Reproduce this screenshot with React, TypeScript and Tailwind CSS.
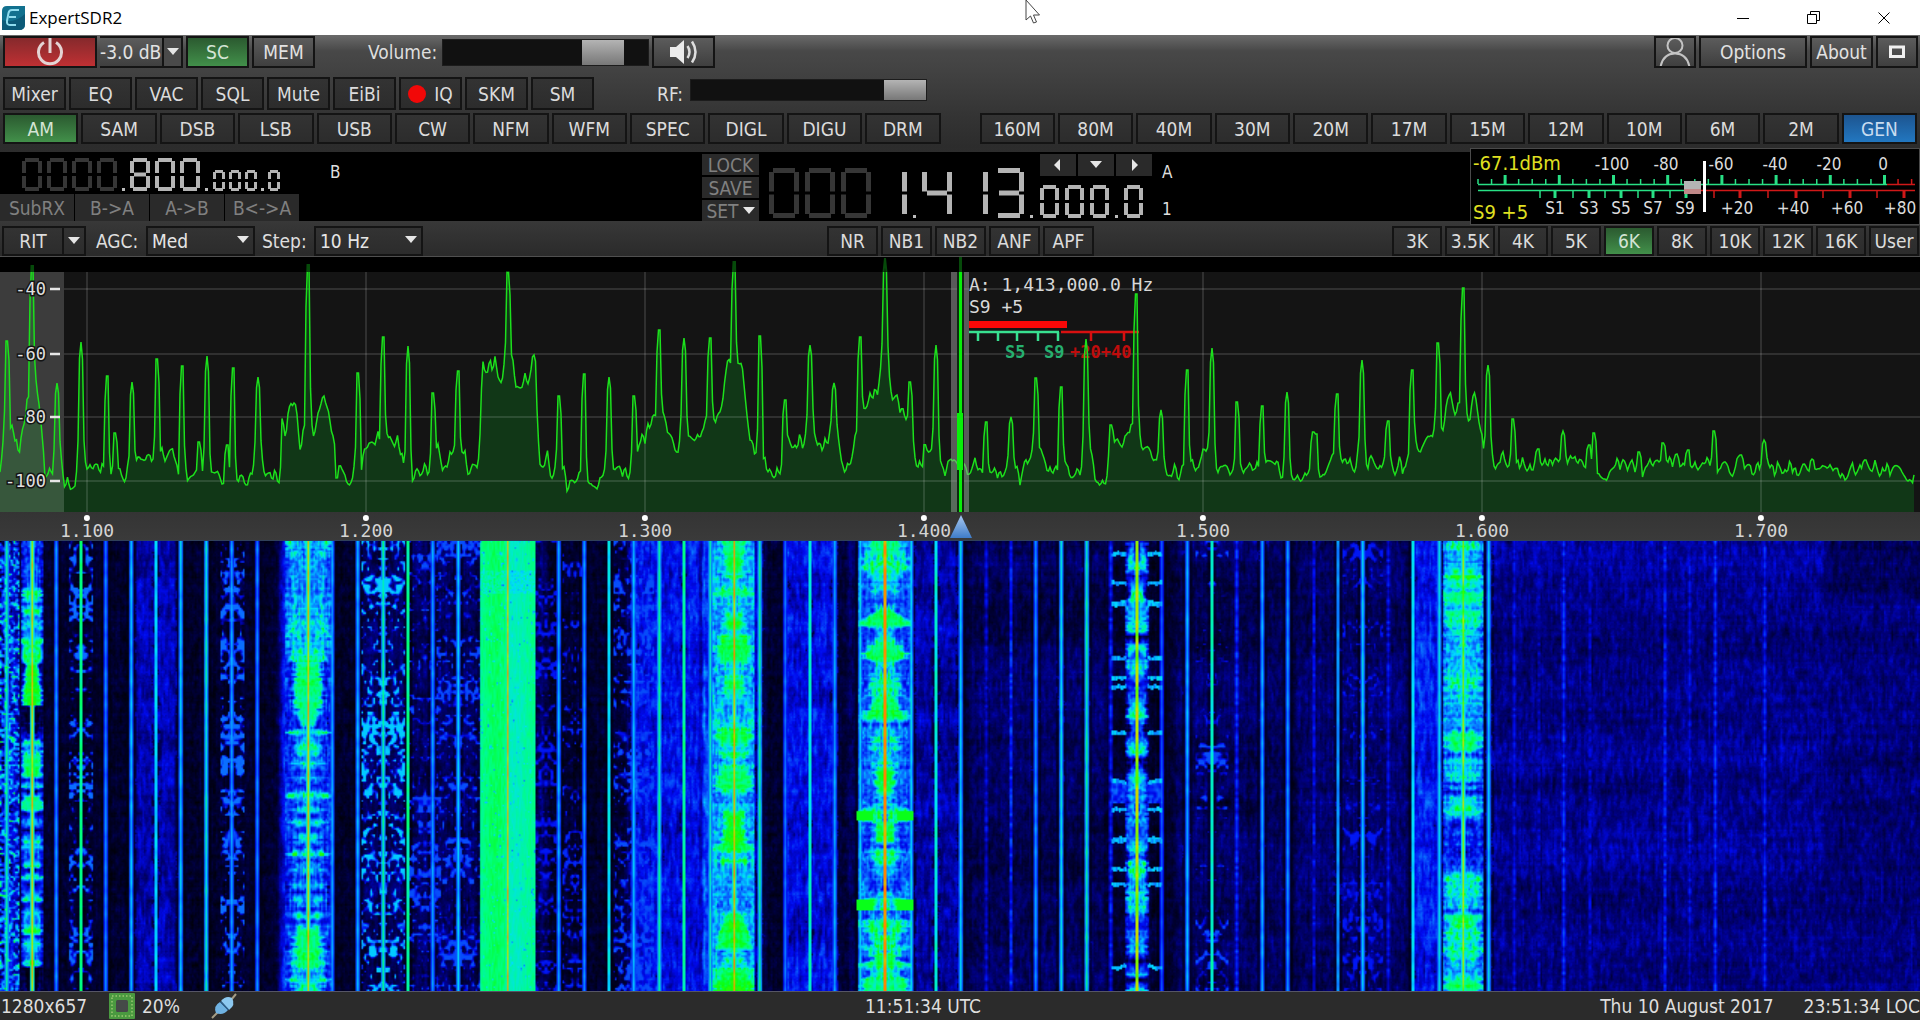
import { useEffect, useRef, type ReactNode } from "react";
import clsx from "clsx";

const modes = ["AM", "SAM", "DSB", "LSB", "USB", "CW", "NFM", "WFM", "SPEC", "DIGL", "DIGU", "DRM"];
const bands = ["160M", "80M", "40M", "30M", "20M", "17M", "15M", "12M", "10M", "6M", "2M", "GEN"];
const tools = ["Mixer", "EQ", "VAC", "SQL", "Mute", "EiBi", "IQ", "SKM", "SM"];
const filters = ["3K", "3.5K", "4K", "5K", "6K", "8K", "10K", "12K", "16K", "User"];
const noise = ["NR", "NB1", "NB2", "ANF", "APF"];

type Tone = "dark" | "light" | "green" | "blue" | "red";

const tones: Record<Tone, string> = {
  dark: "from-[#333333] to-[#2c2c2c] text-[#dcdcdc]",
  light: "from-[#5c5c5c] to-[#3f3f3f] text-[#e2e2e2]",
  green: "from-[#2b5a30] to-[#42904a] text-[#d4e4d4]",
  blue: "from-[#1d5590] to-[#2277c0] text-[#c8dcf0]",
  red: "from-[#86292c] to-[#bf3033] text-[#e8d8d8]",
};

function Btn({ tone = "dark", className, children, label }: { tone?: Tone; className?: string; children: ReactNode; label?: string }) {
  return (
    <button
      type="button"
      aria-label={label}
      className={clsx(
        "flex h-full items-center justify-center overflow-hidden border-2 border-[#141414] bg-linear-to-b whitespace-nowrap",
        tones[tone],
        className,
      )}
    >
      {children}
    </button>
  );
}

function Caret({ dir = "down", className }: { dir?: "down" | "left" | "right"; className?: string }) {
  const d = { down: "M0 2H12L6 9Z", left: "M8 0V12L2 6Z", right: "M4 0V12L10 6Z" }[dir];
  return (
    <svg viewBox="0 0 12 12" className={clsx("size-3 fill-[#e6e6e6]", className)} aria-hidden="true">
      <path d={d} />
    </svg>
  );
}

function Combo({ id, value, className }: { id: string; value: string; className?: string }) {
  return (
    <div className={clsx("relative h-full", className)}>
      <select
        id={id}
        defaultValue={value}
        className="h-full w-full appearance-none border-2 border-[#141414] bg-linear-to-b from-[#333333] to-[#2c2c2c] pl-1 text-[#e6e6e6]"
      >
        <option>{value}</option>
      </select>
      <Caret className="pointer-events-none absolute top-2 right-1.5" />
    </div>
  );
}

function Slider({ id, value, className }: { id: string; value: number; className?: string }) {
  return (
    <input
      id={id}
      type="range"
      defaultValue={value}
      className={clsx(
        "appearance-none border border-[#1c1c1c] bg-[#111111]",
        "[&::-webkit-slider-thumb]:w-[42px] [&::-webkit-slider-thumb]:appearance-none [&::-webkit-slider-thumb]:bg-linear-to-b [&::-webkit-slider-thumb]:from-[#b4b4b4] [&::-webkit-slider-thumb]:to-[#787878]",
        className,
      )}
    />
  );
}

/* seven segment display */

const segments: Record<string, string> = {
  "0": "abcdef", "1": "bc", "3": "abcdg", "4": "bcfg", "8": "abcdefg",
};

function Digit({ char, w, h, dim }: { char: string; w: number; h: number; dim?: boolean }) {
  const t = w > 25 ? 5 : w > 15 ? 4 : 3;
  const m = t / 2;
  const lines: Record<string, number[]> = {
    a: [t - 1, m, w - t + 1, m],
    b: [w - m, t - 1, w - m, h / 2 - 1.5],
    c: [w - m, h / 2 + 1.5, w - m, h - t + 1],
    d: [t - 1, h - m, w - t + 1, h - m],
    e: [m, h / 2 + 1.5, m, h - t + 1],
    f: [m, t - 1, m, h / 2 - 1.5],
    g: [t, h / 2, w - t, h / 2],
  };
  return (
    <svg width={w} height={h} aria-hidden="true" className={dim ? "stroke-[#363636]" : "stroke-[#b4b4b4]"}>
      {segments[char].split("").map((s) => {
        const [x1, y1, x2, y2] = lines[s];
        return <line key={s} x1={x1} y1={y1} x2={x2} y2={y2} strokeWidth={t} />;
      })}
    </svg>
  );
}

function Digits({ value, w, h, dim, className }: { value: string; w: number; h: number; dim?: number; className?: string }) {
  return (
    <div className={clsx("flex items-end", className)}>
      <span className="sr-only">{value}</span>
      {value.split("").map((c, i) =>
        c === "." ? (
          <i key={i} className="size-[3px] bg-[#bcbcbc]" />
        ) : (
          <Digit key={i} char={c} w={w} h={h} dim={i < (dim ?? 0)} />
        ),
      )}
    </div>
  );
}

function SMeter() {
  const top = Array.from({ length: 33 }, (_, i) => 8 + i * 13.55);
  const green = [70, 85, 103, 119, 135, 151, 168, 183, 200, 216];
  const red = [244, 270, 298, 326, 353, 380, 407, 434];
  const dbm: [number, string][] = [[142, "-100"], [196, "-80"], [251, "-60"], [305, "-40"], [359, "-20"], [413, "0"]];
  const units: [number, string][] = [
    [85, "S1"], [119, "S3"], [151, "S5"], [183, "S7"], [215, "S9"], [267, "+20"], [323, "+40"], [377, "+60"], [430, "+80"],
  ];
  return (
    <svg viewBox="0 0 450 77" className="h-[77px] w-full bg-black" aria-label="S-meter">
      <rect x="0.5" y="0.5" width="449" height="76" fill="none" stroke="#4a4a4a" />
      <g fill="#e0e020" fontSize="20">
        <text x="3" y="22">-67.1dBm</text>
        <text x="3" y="71">S9 +5</text>
      </g>
      <g fill="#dcdcdc" fontSize="17" textAnchor="middle">
        {dbm.map(([x, t]) => <text key={t} x={x} y="22">{t}</text>)}
        {units.map(([x, t]) => <text key={t} x={x} y="66">{t}</text>)}
      </g>
      <path d="M8 36.5H417M8 42.5H215" stroke="#28e085" strokeWidth="1.5" />
      <path d="M417 36.5H445M222 42.5H445" stroke="#d01818" strokeWidth="1.5" />
      {top.map((x, i) => (
        <path
          key={i}
          d={i % 4 === 2 ? `M${x} 27V36` : `M${x} 31V36`}
          stroke={x > 417 ? "#d01818" : "#28e085"}
          strokeWidth={i % 4 === 2 ? 3 : 1.5}
        />
      ))}
      {green.map((x, i) => <path key={x} d={`M${x} 42V50`} stroke="#28e085" strokeWidth={i % 2 ? 3 : 1.5} />)}
      {red.map((x, i) => <path key={x} d={`M${x} 42V50`} stroke="#d01818" strokeWidth={i % 2 ? 3 : 1.5} />)}
      <rect x="214" y="33" width="17" height="8" fill="#b4b4b4" />
      <rect x="214" y="41" width="17" height="5" fill="#c08888" />
      <rect x="233" y="13" width="3" height="51" fill="#ffffff" />
    </svg>
  );
}

/* spectrum: noise floor envelope and carriers, as [x, y] in panel units */

const floor = [
  0, 470, 8, 407, 11, 437, 16, 432, 19, 460, 22, 427, 27, 407, 37, 387, 40, 407, 43, 437, 45, 480, 53, 472, 61, 467, 64, 482,
  78, 480, 86, 467, 100, 470, 118, 477, 135, 480, 139, 458, 153, 457, 163, 458, 176, 453, 178, 473, 204, 480, 224, 480, 245, 480,
  261, 468, 280, 477, 281, 450, 282, 423, 286, 430, 288, 413, 292, 403, 297, 413, 300, 443, 304, 433, 314, 435, 318, 410, 324, 392,
  329, 407, 331, 423, 334, 437, 336, 480, 339, 467, 347, 487, 354, 477, 362, 480, 364, 450, 369, 440, 396, 440, 402, 450, 406, 490,
  412, 483, 420, 470, 429, 470, 439, 450, 445, 470, 451, 450, 465, 453, 469, 473, 478, 463, 481, 417, 482, 365, 496, 365, 501, 378,
  512, 360, 516, 388, 527, 378, 534, 377, 538, 437, 540, 470, 547, 450, 551, 473, 563, 467, 567, 488, 582, 480, 602, 483, 610, 470,
  629, 470, 637, 450, 652, 423, 658, 407, 667, 427, 679, 450, 687, 437, 695, 440, 705, 423, 720, 417, 725, 373, 730, 367, 742, 370,
  745, 390, 750, 437, 758, 457, 762, 463, 771, 470, 779, 473, 783, 457, 789, 437, 795, 450, 799, 437, 803, 447, 808, 430, 816, 432,
  820, 450, 826, 443, 832, 440, 838, 443, 842, 470, 852, 463, 857, 437, 862, 413, 865, 417, 871, 397, 877, 390, 885, 370, 893, 393,
  901, 407, 907, 422, 913, 437, 915, 457, 922, 470, 924, 447, 928, 453, 935, 450, 941, 463, 946, 473, 952, 460, 956, 470, 966, 467,
  979, 463, 983, 477, 991, 470, 1001, 478, 1007, 467, 1011, 457, 1020, 480, 1026, 460, 1036, 450, 1042, 453, 1048, 467, 1056, 468,
  1081, 470, 1089, 447, 1097, 478, 1108, 477, 1110, 440, 1117, 447, 1128, 433, 1140, 440, 1152, 453, 1156, 468, 1171, 475, 1175, 463,
  1179, 480, 1187, 463, 1199, 470, 1203, 450, 1209, 463, 1217, 472, 1228, 473, 1242, 468, 1260, 470, 1280, 468, 1282, 477, 1304, 472,
  1325, 477, 1331, 463, 1341, 460, 1349, 467, 1366, 467, 1372, 460, 1378, 473, 1386, 460, 1394, 470, 1400, 460, 1406, 472, 1413, 437,
  1417, 450, 1423, 443, 1431, 430, 1443, 432, 1446, 410, 1451, 393, 1455, 413, 1464, 420, 1469, 413, 1475, 400, 1479, 420, 1482, 430,
  1484, 453, 1488, 450, 1491, 467, 1504, 457, 1517, 463, 1525, 468, 1541, 463, 1557, 467, 1578, 462, 1602, 470, 1606, 477, 1613, 463,
  1627, 462, 1643, 470, 1655, 460, 1668, 465, 1678, 457, 1682, 467, 1692, 463, 1708, 463, 1721, 467, 1729, 470, 1741, 463, 1749, 472,
  1761, 467, 1778, 470, 1790, 465, 1802, 470, 1831, 467, 1835, 477, 1859, 470, 1872, 468, 1892, 470, 1920, 477,
];

const carriers = [
  7, 341, 32, 266, 57, 383, 81, 342, 107, 376, 115, 433, 132, 382, 157, 359, 182, 366, 199, 442, 207, 356, 227, 445, 233, 368,
  258, 377, 308, 265, 358, 373, 383, 337, 408, 346, 433, 393, 458, 371, 508, 272, 534, 355, 559, 396, 584, 374, 609, 377, 634, 396,
  659, 330, 684, 338, 710, 338, 734, 262, 760, 336, 785, 400, 810, 345, 834, 383, 860, 337, 885, 258, 910, 382, 936, 345,
  986, 422, 1011, 417, 1036, 378, 1061, 387, 1086, 339, 1111, 425, 1136, 294, 1161, 410, 1187, 370, 1212, 348, 1237, 402, 1262, 406,
  1287, 392, 1313, 432, 1316, 434, 1337, 394, 1362, 360, 1388, 421, 1412, 370, 1438, 343, 1463, 288, 1488, 365, 1513, 419,
  1538, 449, 1563, 431, 1589, 445, 1594, 433, 1639, 452, 1663, 443, 1688, 450, 1714, 431, 1741, 455, 1764, 440, 1812, 459, 1865, 460,
];

function hash(x: number, y: number) {
  let h = Math.imul(x | 0, 374761393) ^ Math.imul(y | 0, 668265263);
  h = Math.imul(h ^ (h >>> 13), 1274126177);
  return ((h ^ (h >>> 16)) >>> 0) / 4294967296;
}

// bilinear value noise
function soft(x: number, y: number) {
  const xi = Math.floor(x);
  const yi = Math.floor(y);
  const fx = x - xi;
  const fy = y - yi;
  const a = hash(xi, yi) * (1 - fx) + hash(xi + 1, yi) * fx;
  const b = hash(xi, yi + 1) * (1 - fx) + hash(xi + 1, yi + 1) * fx;
  return a * (1 - fy) + b * fy;
}

function buildTrace() {
  const points: string[] = [];
  let seg = 0;
  for (let x = 0; x <= 1914; x += 1.5) {
    while (seg < floor.length - 4 && floor[seg + 2] < x) seg += 2;
    const k = (x - floor[seg]) / (floor[seg + 2] - floor[seg]);
    const base = floor[seg + 1] + (floor[seg + 3] - floor[seg + 1]) * Math.min(1, k) + (soft(x / 2.5, 7) - 0.5) * 18;
    let y = base;
    for (let i = 0; i < carriers.length; i += 2) {
      const dx = Math.abs(x - carriers[i]);
      if (dx > 5) continue;
      const top = carriers[i + 1];
      const f = dx < 1 ? 0 : dx < 2.4 ? 0.35 * ((dx - 1) / 1.4) : dx < 3.4 ? 0.75 : 0.95;
      y = Math.min(y, top + (base - top) * f);
    }
    points.push(`${x},${y.toFixed(1)}`);
  }
  return points.join(" ");
}

const trace = buildTrace();
const marks = [
  [87, "1.100"], [366, "1.200"], [645, "1.300"], [924, "1.400"], [1203, "1.500"], [1482, "1.600"], [1761, "1.700"],
] as const;
const levels = [[289, "-40"], [354, "-60"], [417, "-80"], [481, "-100"]] as const;

function Spectrum() {
  return (
    <svg viewBox="0 257 1920 255" preserveAspectRatio="none" className="block h-[255px] w-full bg-black font-['DejaVu_Sans_Mono',monospace]">
      <defs>
        <clipPath id="plot"><rect x="0" y="272" width="1920" height="240" /></clipPath>
        <clipPath id="over"><rect x="0" y="257" width="1920" height="15" /></clipPath>
        <clipPath id="shade"><rect x="0" y="272" width="64" height="240" /></clipPath>
      </defs>
      <rect y="272" width="1920" height="240" fill="#141414" />
      <rect y="272" width="64" height="240" fill="#3c3c3c" />
      <polygon points={`0,512 ${trace} 1914,512`} fill="#113717" clipPath="url(#plot)" />
      <polygon points={`0,512 ${trace} 1914,512`} fill="#ffffff" opacity="0.16" clipPath="url(#shade)" />
      <g stroke="#ffffff" strokeOpacity="0.12" strokeWidth="2">
        {levels.map(([y]) => <path key={y} d={`M64 ${y}H1920`} />)}
        {marks.map(([x]) => <path key={x} d={`M${x} 272V512`} />)}
      </g>

      {/* received signal scale beside the tuning cursor */}
      <g fill="#d8d8d8" fontSize="18">
        <text x="969" y="291">A: 1,413,000.0 Hz</text>
        <text x="969" y="313">S9 +5</text>
      </g>
      <rect x="969" y="321" width="98" height="7" fill="#f80808" />
      <path d="M969 332H1059M978 332V341M998 332V341M1017 332V341M1038 332V341M1058 332V341" stroke="#38e090" strokeWidth="2.5" />
      <path d="M1061 332H1139M1091 332V341M1124 332V341" stroke="#d81010" strokeWidth="2.5" />
      <g fontSize="17" fontWeight="bold">
        <text x="1005" y="358" fill="#26b070">S5</text>
        <text x="1044" y="358" fill="#26b070">S9</text>
        <text x="1070" y="358" fill="#c00c0c">+20+40</text>
      </g>

      <polyline points={trace} fill="none" stroke="#1ce01c" strokeWidth="1.5" clipPath="url(#plot)" />
      <polyline points={trace} fill="none" stroke="#064a0a" strokeWidth="2" clipPath="url(#over)" />

      <rect x="951" y="272" width="18" height="240" fill="#a0a0a0" opacity="0.5" />
      <rect x="957" y="272" width="7" height="240" fill="#0e2a10" />
      <rect x="957" y="413" width="6" height="57" fill="#08f008" />
      <rect x="959" y="272" width="3" height="240" fill="#08f008" />
      <rect x="959" y="257" width="3" height="15" fill="#064a0a" />

      <g fill="#e0e0e0" fontSize="17" textAnchor="end" stroke="#141414" strokeWidth="3" paintOrder="stroke">
        {levels.map(([y, t]) => <text key={t} x="46" y={y + 6}>{t}</text>)}
      </g>
      {levels.map(([y]) => <path key={y} d={`M50 ${y}H60`} stroke="#e6e6e6" strokeWidth="2.5" />)}
    </svg>
  );
}

function Ruler() {
  return (
    <div className="relative h-[29px] border-b border-[#30405a] bg-linear-to-b from-[#343434] to-[#3a3a3a] font-['DejaVu_Sans_Mono',monospace] text-lg leading-5 text-[#d4d4d4]">
      {marks.map(([x, t]) => (
        <div key={t} className="absolute top-[3px] flex -translate-x-1/2 flex-col items-center" style={{ left: `${x / 19.2}%` }}>
          <i className="size-1.5 rounded-full bg-white" />
          <span>{t}</span>
        </div>
      ))}
      <svg viewBox="0 0 22 24" className="absolute top-[3px] left-[50.05%] h-6 w-[22px] -translate-x-1/2">
        <defs>
          <linearGradient id="tune" x2="0" y2="1">
            <stop stopColor="#a8c8f0" />
            <stop offset="1" stopColor="#3f7cc8" />
          </linearGradient>
        </defs>
        <path d="M11 0L22 23H0Z" fill="url(#tune)" />
      </svg>
    </div>
  );
}

/* waterfall */

const palette = [
  [0, 0, 0, 8], [0.12, 0, 0, 56], [0.25, 0, 0, 130], [0.4, 0, 10, 240], [0.55, 10, 110, 255], [0.68, 0, 220, 255],
  [0.78, 0, 255, 130], [0.86, 10, 255, 10], [0.93, 190, 230, 0], [1, 255, 130, 0],
];

const lines = [
  7, 0.75, 32, 0.94, 56, 0.6, 81, 0.77, 106, 0.58, 131, 0.65, 156, 0.66, 181, 0.67, 206, 0.72, 232, 0.62, 257, 0.58, 308, 0.95,
  332, 0.62, 358, 0.64, 383, 0.76, 408, 0.76, 433, 0.62, 458, 0.67, 508, 0.95, 559, 0.63, 584, 0.6, 609, 0.68, 634, 0.66,
  659, 0.76, 684, 0.76, 710, 0.73, 734, 0.97, 760, 0.76, 785, 0.56, 810, 0.72, 835, 0.63, 860, 0.68, 885, 0.99, 911, 0.68,
  936, 0.71, 961, 0.68, 986, 0.35, 1011, 0.42, 1036, 0.61, 1061, 0.7, 1087, 0.76, 1111, 0.42, 1137, 0.91, 1162, 0.52, 1187, 0.64,
  1212, 0.72, 1237, 0.44, 1262, 0.63, 1288, 0.6, 1314, 0.36, 1338, 0.59, 1363, 0.68, 1388, 0.38, 1413, 0.67, 1439, 0.69,
  1463, 0.91, 1489, 0.68, 1514, 0.36, 1539, 0.3, 1564, 0.44, 1590, 0.32, 1665, 0.4, 1690, 0.36, 1715, 0.44, 1765, 0.42,
];

// diffuse energy around stations: [from, to, level]
const glow = [
  [0, 22, 0.34], [130, 182, 0.31], [276, 337, 0.42], [358, 410, 0.2], [410, 480, 0.2], [534, 550, 0.22], [625, 706, 0.4], [696, 724, 0.5],
  [742, 768, 0.32], [780, 842, 0.38], [842, 860, 0.2], [908, 966, 0.3], [966, 1110, 0.19], [1110, 1170, 0.12], [1170, 1290, 0.2],
  [1290, 1412, 0.22], [1408, 1446, 0.42], [1480, 1830, 0.26], [1700, 1990, 0.23],
];

// programme modulation: [y, level, width] triples per station
const stations = [
  { x: 32, half: 11, edge: 0.25, keys: [
    0, 0.5, 1, 45, 0.5, 1, 50, 0.8, 1, 58, 0.7, 1, 62, 0.45, 1, 70, 0.79, 1, 76, 0.5, 1, 82, 0.79, 1, 92, 0.5, 1, 100, 0.74, 1, 115, 0.72, 1,
    125, 0.82, 0.7, 163, 0.84, 1, 165, 0.15, 1, 182, 0.15, 1, 195, 0.4, 1, 200, 0.82, 1, 208, 0.6, 1, 215, 0.8, 1, 235, 0.8, 1, 238, 0.3, 1,
    245, 0.7, 1, 250, 0.3, 1, 256, 0.78, 1, 268, 0.77, 1, 272, 0.3, 1, 282, 0.7, 1, 288, 0.2, 1, 300, 0.72, 1, 312, 0.5, 1, 325, 0.82, 1,
    328, 0.2, 1, 335, 0.76, 1, 342, 0.3, 1, 358, 0.8, 1, 362, 0.3, 1, 370, 0.72, 1, 378, 0.5, 1, 392, 0.8, 1, 394, 0.3, 1, 402, 0.7, 1,
    415, 0.5, 1, 424, 0.78, 1, 426, 0.15, 1, 450, 0.15, 1] },
  { x: 308, half: 23, edge: 0.44, keys: [
    0, 0.6, 1, 100, 0.64, 1, 110, 0.74, 0.9, 125, 0.78, 0.6, 160, 0.79, 0.6, 182, 0.77, 0.5, 186, 0.5, 0.3, 191, 0.77, 1, 195, 0.6, 0.5,
    207, 0.79, 0.7, 218, 0.62, 0.5, 222, 0.76, 0.9, 228, 0.5, 0.3, 238, 0.68, 0.8, 244, 0.45, 0.4, 254, 0.76, 1, 262, 0.5, 0.4, 268, 0.68, 0.8,
    274, 0.4, 0.3, 281, 0.7, 0.8, 288, 0.45, 0.3, 297, 0.72, 0.7, 306, 0.45, 0.4, 313, 0.78, 1, 318, 0.42, 0.3, 328, 0.7, 0.7, 336, 0.4, 0.4,
    345, 0.7, 0.8, 350, 0.4, 0.3, 359, 0.7, 0.7, 366, 0.4, 0.4, 375, 0.77, 1, 380, 0.45, 0.4, 388, 0.79, 0.6, 400, 0.8, 0.7, 425, 0.8, 0.7,
    432, 0.6, 0.7, 438, 0.74, 1, 442, 0.65, 0.6, 450, 0.77, 0.7] },
  { x: 734, half: 21, edge: 0.6, keys: [
    0, 0.8, 0.6, 25, 0.83, 0.4, 40, 0.68, 0.4, 52, 0.8, 1, 58, 0.6, 0.8, 75, 0.78, 0.4, 85, 0.83, 0.5, 90, 0.68, 0.4, 100, 0.83, 0.8,
    118, 0.81, 0.9, 125, 0.7, 0.5, 145, 0.83, 0.6, 155, 0.6, 0.6, 180, 0.64, 0.6, 192, 0.81, 0.8, 200, 0.81, 0.9, 208, 0.66, 0.6, 213, 0.81, 0.9,
    218, 0.7, 0.5, 230, 0.79, 0.9, 246, 0.82, 0.9, 255, 0.58, 0.7, 265, 0.62, 0.8, 272, 0.83, 0.5, 300, 0.84, 0.6, 308, 0.83, 1, 312, 0.62, 0.8,
    320, 0.81, 0.7, 325, 0.58, 0.8, 370, 0.64, 0.8, 380, 0.84, 0.5, 405, 0.82, 1, 410, 0.68, 0.5, 425, 0.74, 0.9, 432, 0.84, 1, 450, 0.86, 1] },
  { x: 885, half: 27, edge: 0.5, keys: [
    0, 0.78, 0.6, 25, 0.76, 0.9, 40, 0.66, 0.5, 60, 0.52, 0.5, 70, 0.8, 0.4, 82, 0.82, 1, 88, 0.7, 0.4, 100, 0.77, 0.4, 113, 0.82, 1,
    118, 0.8, 0.5, 125, 0.7, 0.4, 150, 0.74, 0.6, 158, 0.79, 0.4, 176, 0.83, 0.9, 182, 0.55, 0.5, 200, 0.75, 0.5, 218, 0.58, 0.6, 230, 0.82, 0.4,
    248, 0.82, 0.4, 260, 0.66, 0.3, 269, 0.72, 0.9, 279, 0.72, 0.9, 281, 0.79, 0.4, 298, 0.8, 0.5, 304, 0.55, 0.4, 310, 0.78, 0.5, 325, 0.68, 0.5,
    345, 0.45, 0.4, 355, 0.7, 0.5, 358, 0.74, 1, 368, 0.74, 1, 370, 0.5, 0.5, 382, 0.76, 1, 395, 0.77, 0.5, 410, 0.72, 0.9, 416, 0.82, 0.4,
    424, 0.78, 1, 430, 0.7, 0.5, 440, 0.78, 1, 450, 0.78, 1] },
  { x: 1137, half: 12, edge: 0.15, keys: [
    0, 0.4, 1, 26, 0.74, 1, 34, 0.3, 1, 50, 0.7, 0.6, 70, 0.66, 1, 90, 0.66, 1, 95, 0.1, 1, 104, 0.72, 0.9, 116, 0.6, 1, 130, 0.66, 0.9,
    140, 0.4, 1, 160, 0.5, 0.8, 175, 0.76, 1, 186, 0.4, 0.5, 200, 0.6, 1, 211, 0.74, 1, 218, 0.3, 0.5, 235, 0.7, 0.9, 262, 0.5, 1,
    278, 0.55, 1, 295, 0.5, 1, 307, 0.7, 1, 315, 0.5, 0.7, 325, 0.76, 1, 340, 0.6, 1, 350, 0.66, 1, 366, 0.7, 1, 385, 0.4, 1, 397, 0.6, 1,
    410, 0.6, 1, 420, 0.2, 1, 433, 0.72, 1, 438, 0.2, 1, 448, 0.7, 1] },
  { x: 1463, half: 20, edge: 0.45, keys: [
    0, 0.72, 1, 18, 0.62, 1, 30, 0.68, 1, 35, 0.76, 1, 48, 0.68, 1, 52, 0.79, 1, 60, 0.78, 1, 66, 0.62, 1, 70, 0.78, 1, 80, 0.7, 1, 100, 0.68, 1,
    125, 0.6, 1, 135, 0.73, 1, 145, 0.77, 1, 150, 0.64, 1, 170, 0.62, 1, 188, 0.64, 1, 192, 0.79, 1, 208, 0.78, 1, 212, 0.45, 1, 218, 0.72, 1,
    238, 0.71, 1, 242, 0.45, 1, 246, 0.68, 1, 250, 0.38, 1, 256, 0.68, 1, 272, 0.73, 1, 280, 0.42, 1, 300, 0.45, 1, 320, 0.42, 1, 328, 0.56, 1,
    334, 0.74, 1, 366, 0.68, 1, 369, 0.4, 1, 374, 0.79, 1, 386, 0.74, 1, 400, 0.72, 1, 410, 0.77, 1, 420, 0.64, 1, 432, 0.58, 1, 440, 0.8, 1,
    450, 0.78, 1] },
];

const sideBars = [12, 42, 61, 63, 117, 136, 145, 191, 240, 268, 298, 300, 327, 343, 425];

// weak stations: speckle mirrored around the carrier, [x, half width, density, level]
const speckle = [
  [383, 22, 0.55, 0.66], [232, 12, 0.5, 0.55], [81, 12, 0.5, 0.55], [458, 22, 0.34, 0.5], [1212, 17, 0.3, 0.5], [425, 16, 0.34, 0.5],
  [634, 20, 0.34, 0.5], [546, 10, 0.4, 0.42], [575, 12, 0.3, 0.45], [1363, 20, 0.26, 0.42],
];

function levelAt(x: number, y: number, px: number, py: number) {
  let v = 0.09;
  for (const [a, b, lvl] of glow) {
    if (x < a || x > b) continue;
    const fade = Math.min(1, (x - a) / 8, (b - x) / 8);
    const slow = (soft(a, y / 22) - 0.6) * 0.1;
    const streak = (soft(px / 1.3, py / 7) - 0.5) * lvl * 0.45;
    v = Math.max(v, 0.09 + (lvl - 0.09 + slow + streak) * fade);
  }
  v += (soft(px / 1.6, py / 3.5) - 0.5) * 0.14 + (hash(px, py) - 0.5) * 0.05 + (soft(px / 40, py / 1.5) - 0.5) * 0.05 + (hash(px, 1) - 0.5) * 0.03;

  if (x < 19) v = Math.max(v, soft(px / 1.5, py / 1.5) * 0.9 - 0.05);

  for (const [cx, half, density, lvl] of speckle) {
    const dx = Math.abs(x - cx);
    if (dx > half) continue;
    const busy = soft(cx, y / 14) * 0.5 + density * 0.5;
    const n = soft(dx / 3 + cx * 3, py / 2.2);
    const k = Math.max(0, Math.min(1, (n + busy - 1) * 4));
    v = Math.max(v, v + (lvl - v) * k);
  }

  for (const s of stations) {
    const dx = Math.abs(x - s.x);
    if (dx > s.half) continue;
    let i = 0;
    while (i < s.keys.length - 6 && s.keys[i + 3] < y) i += 3;
    const k = Math.min(1, (y - s.keys[i]) / (s.keys[i + 3] - s.keys[i]));
    const lvl = s.keys[i + 1] + (s.keys[i + 4] - s.keys[i + 1]) * k;
    const ragged = 0.75 + soft(s.x, py / 1.5) * 0.5;
    const reach = s.half * ragged * (s.keys[i + 2] + (s.keys[i + 5] - s.keys[i + 2]) * k);
    const out = Math.max(0, Math.min(1, (dx - reach * 0.7) / (reach * 0.5)));
    const col = dx / 2 + s.x * 3;
    const n = (soft(col, py / 1.6) - 0.5) * 0.26 + (soft(s.x, py / 1.3) - 0.5) * 0.1 + (soft(col * 1.3, py / 9) - 0.5) * 0.2;
    const calm = lvl > 0.77 && out < 0.2 ? 0.4 : 1;
    v = lvl + (Math.min(lvl, s.edge) - lvl) * out + n * calm;
    if (s.x === 308 && y < 95) v += Math.cos((dx - 17) / 4) * 0.05;
    v = Math.min(v, 0.87);
  }

  const d885 = Math.abs(x - 885);
  if (d885 > 12 && d885 < 28 && ((y > 269 && y < 279) || (y > 357 && y < 368))) v = 0.85;

  const d1137 = Math.abs(x - 1137);
  if (d1137 > 11 && d1137 < 26) {
    for (const b of sideBars) {
      const wob = (soft(d1137 / 3, b) - 0.5) * 3;
      if (Math.abs(y - b + wob) < 2) v = 0.56 + hash(px, b) * 0.14;
    }
    if (y > 240 && y < 262) v = Math.max(v, 0.34 + soft(px / 1.5, py / 2) * 0.22);
  }

  if (x > 480.5 && x < 535.5) {
    v = x < 506 ? 0.785 : 0.75;
    v += Math.cos((x - 496) / 6) * 0.018 + (soft(px, py / 4) - 0.5) * 0.05;
    const pit = soft(px, py / 1.4 + 900);
    if (pit > 0.88) v -= (pit - 0.88) * 1.6;
    if (y > 28 && y < 52) v -= hash(px, py) * 0.08;
  }

  for (let i = 0; i < lines.length; i += 2) {
    const dx = Math.abs(x - lines[i]);
    const lvl = lines[i + 1];
    const drift = lvl < 0.5 ? (soft(i, py / 2) - 0.5) * 0.18 : (soft(i, py / 5) - 0.5) * 0.07;
    if (dx < 1.1) v = Math.max(v, lvl + drift);
    else if (dx < 1.9) v = Math.max(v, lvl * 0.76 + drift);
    else if (dx < 5 && lvl > 0.5 && v < 0.28) v *= 0.6;
  }
  return v;
}

function Waterfall() {
  const ref = useRef<HTMLCanvasElement>(null);

  useEffect(() => {
    const ctx = ref.current?.getContext("2d");
    if (!ctx) return;
    const img = ctx.createImageData(1280, 290);
    for (let py = 0; py < 290; py++) {
      for (let px = 0; px < 1280; px++) {
        const v = Math.max(0, Math.min(0.999, levelAt((px + 0.5) * 1.5, (py / 290) * 450, px, py)));
        let s = 0;
        while (palette[s + 1][0] <= v) s++;
        const a = palette[s];
        const b = palette[s + 1];
        const k = (v - a[0]) / (b[0] - a[0]);
        const o = (py * 1280 + px) * 4;
        for (let c = 0; c < 3; c++) img.data[o + c] = a[c + 1] + (b[c + 1] - a[c + 1]) * k;
        img.data[o + 3] = 255;
      }
    }
    ctx.putImageData(img, 0, 0);
  }, []);

  return <canvas ref={ref} width={1280} height={290} className="block min-h-0 w-full flex-1" />;
}

function TitleBar() {
  return (
    <header className="relative flex h-[35px] shrink-0 items-center bg-white pl-0.5 text-black">
      <svg viewBox="0 0 23 24" className="h-6 w-[23px]" aria-hidden="true">
        <path d="M5 0H23V18Q23 24 17 24H0V5Q0 0 5 0Z" fill="#12718f" />
        <path d="M0 14Q12 18 23 8V18Q23 24 17 24H0Z" fill="#0c5a78" />
        <path d="M17 4H10Q7 4 6.500 7L5 15Q4.500 19 8 19H14M7 11H14" fill="none" stroke="#8fdcee" strokeWidth="2" />
      </svg>
      <h1 className="ml-1 font-['Open_Sans',sans-serif] text-[17px]">ExpertSDR2</h1>
      <svg viewBox="0 0 16 25" className="absolute top-0 left-[53.4%] h-[25px] w-4" aria-hidden="true">
        <path d="M1 0V20L5.500 16L8.500 23L11.500 22L8.500 15H14.500Z" fill="#fff" stroke="#444" />
      </svg>
      <div className="ml-auto flex">
        <button type="button" aria-label="Minimize" className="flex h-[35px] w-[70px] items-center justify-center">
          <svg width="12" height="12" stroke="#000"><path d="M0 6.500H12" /></svg>
        </button>
        <button type="button" aria-label="Restore" className="flex h-[35px] w-[70px] items-center justify-center">
          <svg width="13" height="13" fill="none" stroke="#000"><path d="M.5 3.500H9.500V12.500H.5ZM3.500 3.500V.5H12.500V9.500H9.500" /></svg>
        </button>
        <button type="button" aria-label="Close" className="flex h-[35px] w-[72px] items-center justify-center">
          <svg width="12" height="12" stroke="#000"><path d="M.5.5L11.500 11.500M11.500.5L.5 11.500" /></svg>
        </button>
      </div>
    </header>
  );
}

function Toolbar() {
  return (
    <>
      <div className="flex h-8 gap-[3px] pr-0.5 pl-[3px]">
        <Btn tone="red" className="w-[94px]" label="Power">
          <svg viewBox="0 0 28 30" className="h-[30px] w-7" fill="none" stroke="#e4d4d4" strokeWidth="3">
            <path d="M14 0V16M8 5.500A11.500 11.500 0 1 0 20 5.500" />
          </svg>
        </Btn>
        <div className="relative h-full w-[83px]">
          <select
            aria-label="Preamp"
            defaultValue="-3.0 dB"
            className="h-full w-full appearance-none border-2 border-r-0 border-l-0 border-[#141414] bg-linear-to-b from-[#5c5c5c] to-[#3f3f3f] text-[#e2e2e2]"
          >
            <option>-3.0 dB</option>
          </select>
          <span className="pointer-events-none absolute top-0 right-0 flex h-full w-[21px] items-center justify-center border-2 border-[#141414] bg-[#4a4a4a]">
            <Caret />
          </span>
        </div>
        <Btn tone="green" className="w-[63px]">SC</Btn>
        <Btn tone="light" className="w-[63px]">MEM</Btn>
        <label htmlFor="volume" className="ml-[50px] self-center">Volume:</label>
        <Slider id="volume" value={85} className="ml-0.5 h-[27px] w-[207px] self-center [&::-webkit-slider-thumb]:h-[25px]" />
        <Btn tone="light" className="w-[63px]" label="Sound">
          <svg viewBox="0 0 30 28" className="h-7 w-[30px]" aria-hidden="true">
            <path d="M1 9H7L15 2V26L7 19H1Z" fill="#ececec" />
            <path d="M18.500 8Q22.500 14 18.500 20M23 3.500Q30 14 23 24.500" fill="none" stroke="#dedede" strokeWidth="2.500" />
          </svg>
        </Btn>
        <Btn tone="light" className="ml-auto w-[42px]" label="Account">
          <svg viewBox="0 0 32 30" className="h-[30px] w-8" fill="none" stroke="#c4c4c4" strokeWidth="2">
            <ellipse cx="16" cy="8.500" rx="7.500" ry="7.500" />
            <path d="M1.500 30Q4 16.500 16 16.500T30.500 30" />
          </svg>
        </Btn>
        <Btn tone="light" className="w-[108px]">Options</Btn>
        <Btn tone="light" className="w-[63px]">About</Btn>
        <Btn tone="light" className="w-[42px]" label="Compact view">
          <svg width="16" height="14" fill="none" stroke="#f0f0f0" strokeWidth="3"><path d="M1.500 2H14.500V11.500H1.500Z" /></svg>
        </Btn>
      </div>

      <div className="mt-[9px] flex h-[33px] gap-[3px] pl-[3px]">
        {tools.map((t) => (
          <Btn key={t} className="w-[63px] gap-2">
            {t === "IQ" && <i className="size-[18px] rounded-full bg-[#f20808]" />}
            {t}
          </Btn>
        ))}
        <label htmlFor="rf" className="ml-[60px] self-center">RF:</label>
        <Slider id="rf" value={100} className="mt-0.5 ml-1 h-[22px] w-[237px] [&::-webkit-slider-thumb]:h-5" />
      </div>

      <div className="mt-[3px] flex h-[31px] gap-[39px] px-[3px]">
        <div className="grid flex-1 grid-cols-12 gap-[3px]">
          {modes.map((m) => <Btn key={m} tone={m === "AM" ? "green" : "dark"}>{m}</Btn>)}
        </div>
        <div className="grid flex-1 grid-cols-12 gap-[3px]">
          {bands.map((b) => <Btn key={b} tone={b === "GEN" ? "blue" : "dark"}>{b}</Btn>)}
        </div>
      </div>
    </>
  );
}

const flat = "flex items-center justify-center bg-[#2a2a2a] text-[#808080]";

function Vfo() {
  return (
    <div className="mt-1 grid h-[78px] grid-cols-[702fr_768fr_450fr]">
      <section className="mt-1 flex h-[69px] flex-col justify-between bg-black" aria-label="VFO B">
        <div className="flex gap-[50px] pt-1.5 pl-[22px]">
          <div className="flex h-[33px] items-end gap-[5px]">
            <Digits value="0000" w={20} h={33} dim={4} className="gap-[5px]" />
            <Digits value=".800." w={20} h={33} className="gap-[5px]" />
            <Digits value="000.0" w={12} h={21} className="gap-1" />
          </div>
          <span className="text-[17px] leading-7">B</span>
        </div>
        <div className="flex h-[27px] gap-px">
          {["SubRX", "B->A", "A->B", "B<->A"].map((t) => (
            <button key={t} type="button" className={clsx(flat, "w-[74px]")}>{t}</button>
          ))}
        </div>
      </section>
      <section className="mt-1 flex h-[69px] items-end bg-black" aria-label="VFO A">
        <div className="flex w-[57px] flex-col gap-0.5 self-end">
          <button type="button" className={clsx(flat, "h-[21px]")}>LOCK</button>
          <button type="button" className={clsx(flat, "h-[21px]")}>SAVE</button>
          <button type="button" className={clsx(flat, "h-[21px] gap-1")}>SET<Caret className="fill-[#b0b0b0]" /></button>
        </div>
        <Digits value="0001.413." w={30} h={50} dim={3} className="mb-[3px] ml-2.5 gap-1.5" />
        <div className="mb-[3px] ml-[7px] flex flex-col gap-[9px]">
          <div className="flex gap-0.5">
            <button type="button" aria-label="Step down" className={clsx(flat, "h-[22px] w-9")}><Caret dir="left" /></button>
            <button type="button" aria-label="Memory list" className={clsx(flat, "h-[22px] w-9")}><Caret /></button>
            <button type="button" aria-label="Step up" className={clsx(flat, "h-[22px] w-9")}><Caret dir="right" /></button>
          </div>
          <Digits value="000.0" w={19} h={33} className="gap-1.5" />
        </div>
        <div className="ml-2.5 flex h-full flex-col justify-between pt-2 text-[17px] leading-6">
          <span>A</span>
          <span>1</span>
        </div>
      </section>
      <SMeter />
    </div>
  );
}

function FilterBar() {
  return (
    <div className="flex h-[31px] items-center border-b border-[#505050] pr-px pl-0.5">
      <Btn className="w-[62px]">RIT</Btn>
      <Btn className="w-[22px] border-l-0" label="RIT options"><Caret /></Btn>
      <label htmlFor="agc" className="ml-2.5 w-[50px]">AGC:</label>
      <Combo id="agc" value="Med" className="w-[109px]" />
      <label htmlFor="step" className="ml-[7px] w-[52px]">Step:</label>
      <Combo id="step" value="10 Hz" className="w-[109px]" />
      <div className="ml-[404px] flex h-full gap-[3px]">
        {noise.map((n) => <Btn key={n} className="w-[51px]">{n}</Btn>)}
      </div>
      <div className="ml-auto flex h-full gap-[3px]">
        {filters.map((f) => <Btn key={f} tone={f === "6K" ? "green" : "dark"} className="w-[50px]">{f}</Btn>)}
      </div>
    </div>
  );
}

function StatusBar() {
  return (
    <footer className="grid h-[29px] shrink-0 grid-cols-[865fr_1055fr] items-center overflow-hidden border-t border-[#555566] bg-[#2b2b2b] whitespace-nowrap">
      <div className="flex items-center pl-px">
        <span className="w-[108px]">1280x657</span>
        <svg viewBox="0 0 26 26" className="size-[26px]" aria-hidden="true">
          <rect width="26" height="26" rx="1" fill="#4a9a40" />
          <rect x="3" y="3" width="20" height="20" fill="none" stroke="#9cc870" strokeWidth="1.500" strokeDasharray="1.500 2" />
          <rect x="7" y="7" width="12" height="12" rx="1.500" fill="#454a48" />
        </svg>
        <span className="ml-[7px] w-[69px]">20%</span>
        <svg viewBox="0 0 26 26" className="size-[26px]" aria-hidden="true">
          <path d="M1 25L7 19M20 7L25 1" stroke="#a49c84" strokeWidth="2" />
          <path d="M5 20Q2 13 9 9L12 12L14 14L17 17Q12 23 5 20Z" fill="#6fb2e2" />
          <path d="M10 8Q15 2 21 5Q25 12 18 17Z" fill="#8cc8f0" />
          <path d="M9.500 8.500L17.500 17" stroke="#2c5f8c" strokeWidth="1.500" />
        </svg>
      </div>
      <div className="flex items-center justify-between">
        <span>11:51:34 UTC</span>
        <div className="flex gap-[30px]">
          <span>Thu 10 August 2017</span>
          <span>23:51:34 LOC</span>
        </div>
      </div>
    </footer>
  );
}

export default function App() {
  return (
    <div className="flex h-screen min-h-[700px] flex-col overflow-hidden bg-black font-['DejaVu_Sans_Condensed','Noto_Sans',sans-serif] text-[19px] leading-6 text-[#dedede]">
      <TitleBar />
      <div className="shrink-0 bg-[linear-gradient(#6a6a6a,#484848_16px,#404040_42px,#343434_80px,#2c2c2c_112px,#383838_186px,#2a2a2a)] pt-px">
        <Toolbar />
        <Vfo />
        <FilterBar />
      </div>
      <div className="shrink-0">
        <Spectrum />
        <Ruler />
      </div>
      <Waterfall />
      <StatusBar />
    </div>
  );
}
